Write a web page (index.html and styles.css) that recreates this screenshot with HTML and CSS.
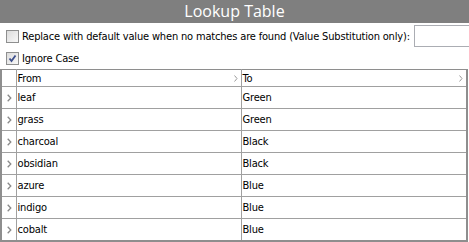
FILE: index.html
```html
<!DOCTYPE html>
<html lang="en">
<head>
  <meta charset="UTF-8">
  <title>Lookup Table</title>
  <link rel="stylesheet" href="styles.css">
</head>
<body>
  <div class="title">Lookup Table</div>

  <div class="option-row default-row">
    <span class="check"></span>
    <label class="option-label">Replace with default value when no matches are found (Value Substitution only):</label>
    <input type="text" class="default-input">
  </div>

  <div class="option-row ignore-row">
    <span class="check checked">
      <svg width="9" height="9" viewBox="0 0 9 9"><polyline points="1.5,4.5 3.5,7 7.5,1.5" fill="none" stroke="#3d4f8c" stroke-width="1.8"/></svg>
    </span>
    <label class="option-label">Ignore Case</label>
  </div>

  <table class="lookup">
    <colgroup>
      <col class="col-handle">
      <col class="col-from">
      <col class="col-to">
    </colgroup>
    <thead>
      <tr>
        <th></th>
        <th><div class="head-cell">From<svg class="head-arrow" width="4" height="7" viewBox="0 0 4 7"><polyline points="0.5,0.5 3,3.5 0.5,6.5" fill="none" stroke="#9a9a9a" stroke-width="1"/></svg></div></th>
        <th><div class="head-cell">To<svg class="head-arrow" width="4" height="7" viewBox="0 0 4 7"><polyline points="0.5,0.5 3,3.5 0.5,6.5" fill="none" stroke="#9a9a9a" stroke-width="1"/></svg></div></th>
      </tr>
    </thead>
    <tbody id="rows"></tbody>
  </table>

  <script>
    const lookup = [
      ['leaf', 'Green'],
      ['grass', 'Green'],
      ['charcoal', 'Black'],
      ['obsidian', 'Black'],
      ['azure', 'Blue'],
      ['indigo', 'Blue'],
      ['cobalt', 'Blue']
    ];

    const arrow = '<svg width="5" height="8" viewBox="0 0 5 8"><polyline points="0.7,0.7 3.8,4 0.7,7.3" fill="none" stroke="#8a8a8a" stroke-width="1.3"/></svg>';
    const tbody = document.getElementById('rows');

    lookup.forEach(([from, to]) => {
      const tr = document.createElement('tr');
      tr.innerHTML = `<td class="handle">${arrow}</td><td>${from}</td><td>${to}</td>`;
      tbody.appendChild(tr);
    });
  </script>
</body>
</html>
```

FILE: styles.css
```css
body {
  margin: 0;
  font-family: "DejaVu Sans Condensed", "DejaVu Sans", sans-serif;
  font-size: 11px;
  letter-spacing: -0.17px;
  color: #000;
  background: #fff;
}

.title {
  height: 23px;
  line-height: 23px;
  background-color: #7f7f7f;
  color: #fff;
  text-align: center;
  font-family: "Open Sans", sans-serif;
  font-size: 16px;
  letter-spacing: 0;
}

.option-row {
  display: flex;
  align-items: center;
  padding-left: 6px;
}

.default-row {
  height: 22px;
  margin-top: 2px;
}

.ignore-row {
  height: 19px;
  margin-top: 2px;
}

.check {
  display: flex;
  align-items: center;
  justify-content: center;
  width: 11px;
  height: 11px;
  border: 1px solid #8e8f8f;
  background: linear-gradient(135deg, #dcdcdc, #f8f8f8);
  flex-shrink: 0;
}

.option-label {
  margin-left: 3px;
  white-space: nowrap;
}

.default-input {
  flex: 1;
  height: 22px;
  margin-left: 4px;
  margin-right: -2px;
  box-sizing: border-box;
  border: 1px solid #abadb3;
  padding: 0 3px;
  min-width: 0;
}

.lookup {
  width: 468px;
  margin-top: 1px;
  border-collapse: collapse;
  table-layout: fixed;
  border-top: 1px solid #8e8e8e;
  border-left: 2px solid #8e8e8e;
  border-right: 2px solid #8e8e8e;
  border-bottom: 2px solid #8e8e8e;
}

.col-handle {
  width: 15px;
}

.col-from {
  width: 225px;
}

.lookup th,
.lookup td {
  padding: 0 0 0 1px;
  border: 1px solid #a0a0a0;
  text-align: left;
  font-weight: normal;
  white-space: nowrap;
}

.lookup th {
  height: 16px;
  border-top: none;
}

.lookup td {
  height: 21px;
}

.lookup tr > :first-child {
  border-left: none;
}

.lookup tr > :last-child {
  border-right: none;
}

.lookup tbody tr:last-child td {
  border-bottom: none;
}

.head-cell {
  display: flex;
  align-items: center;
  justify-content: space-between;
  padding-right: 3px;
}

.handle {
  text-align: center;
}

.handle svg {
  display: block;
  margin-left: 4px;
}
```
